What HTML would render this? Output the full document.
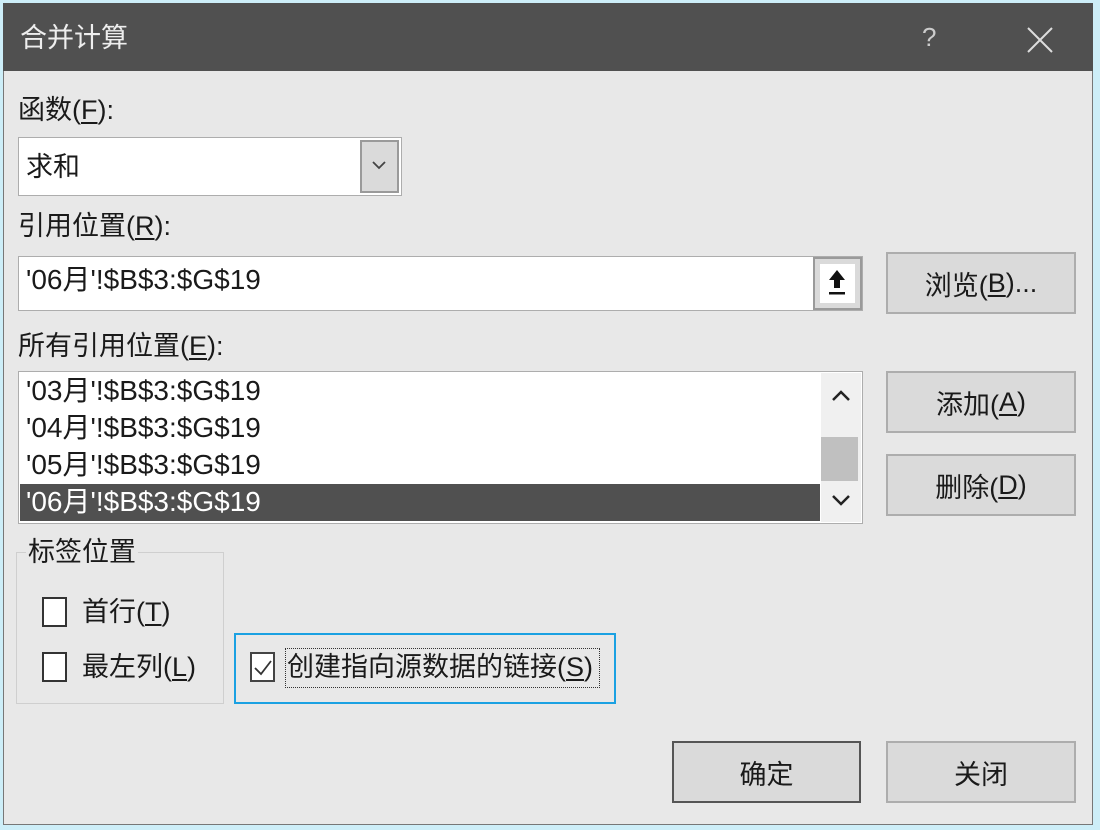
<!DOCTYPE html>
<html><head><meta charset="utf-8"><style>
*{box-sizing:border-box;margin:0;padding:0}
body{width:1100px;height:830px;background:#cdeef8;position:relative;overflow:hidden;font-family:"Liberation Sans","Noto Sans CJK SC",sans-serif;color:#1a1a1a}
.a{position:absolute}
.t{font-size:27px;line-height:30px;white-space:nowrap}
.r{font-size:28px}
.btn{position:absolute;background:#dadada;border:2px solid #adadad;font-size:27px;display:flex;align-items:center;justify-content:center}
.cb{position:absolute;width:25px;height:30px;background:#fff;border:2px solid #333}
u{text-decoration:underline;text-underline-offset:3px}
</style></head><body>
<div class="a" style="left:3px;top:3px;width:1090px;height:822px;background:#e8e8e8;border:1px solid #777"></div>
<div class="a" style="left:3px;top:3px;width:1090px;height:68px;background:#505050"></div>
<div class="a t" style="left:20px;top:23px;color:#eee;font-size:27px">合并计算</div>
<div class="a t" style="left:922px;top:22px;color:#ccc;font-size:26px">?</div>
<svg class="a" style="left:1026px;top:26px" width="28" height="28"><path d="M2 2L26 26M26 2L2 26" stroke="#ddd" stroke-width="2"/></svg>

<div class="a t" style="left:18px;top:95px">函数(<u>F</u>):</div>
<div class="a" style="left:18px;top:137px;width:384px;height:59px;background:#fff;border:1px solid #adadad"></div>
<div class="a t" style="left:26px;top:152px">求和</div>
<div class="a" style="left:360px;top:140px;width:39px;height:53px;background:#dadada;border:2px solid #9a9a9a"></div>
<svg class="a" style="left:371px;top:160px" width="16" height="10"><path d="M2 2L8 8L14 2" fill="none" stroke="#444" stroke-width="1.8"/></svg>

<div class="a t" style="left:18px;top:211px">引用位置(<u>R</u>):</div>
<div class="a" style="left:18px;top:256px;width:845px;height:55px;background:#fff;border:1px solid #adadad"></div>
<div class="a t r" style="left:26px;top:265px">'06月'!$B$3:$G$19</div>
<div class="a" style="left:813px;top:257px;width:49px;height:53px;background:#dadada;border:2px solid #9a9a9a"></div>
<div class="a" style="left:820px;top:264px;width:35px;height:39px;background:#fff"></div>
<svg class="a" style="left:826px;top:268px" width="22" height="30"><path d="M11 2L3 12H8V20H14V12H19Z" fill="#111"/><rect x="3" y="24" width="16" height="2.5" fill="#111"/></svg>
<div class="btn" style="left:886px;top:252px;width:190px;height:62px">浏览(<u>B</u>)...</div>

<div class="a t" style="left:18px;top:331px">所有引用位置(<u>E</u>):</div>
<div class="a" style="left:18px;top:371px;width:845px;height:153px;background:#fff;border:1px solid #adadad"></div>
<div class="a t r" style="left:26px;top:376px">'03月'!$B$3:$G$19</div>
<div class="a t r" style="left:26px;top:413px">'04月'!$B$3:$G$19</div>
<div class="a t r" style="left:26px;top:450px">'05月'!$B$3:$G$19</div>
<div class="a" style="left:20px;top:484px;width:800px;height:37px;background:#505050"></div>
<div class="a t r" style="left:26px;top:487px;color:#fff">'06月'!$B$3:$G$19</div>
<div class="a" style="left:821px;top:373px;width:40px;height:149px;background:#f0f0f0"></div>
<div class="a" style="left:821px;top:437px;width:37px;height:44px;background:#c0c0c0"></div>
<svg class="a" style="left:831px;top:390px" width="20" height="12"><path d="M2 10L10 2L18 10" fill="none" stroke="#222" stroke-width="2.5"/></svg>
<svg class="a" style="left:831px;top:494px" width="20" height="12"><path d="M2 2L10 10L18 2" fill="none" stroke="#222" stroke-width="2.5"/></svg>
<div class="btn" style="left:886px;top:371px;width:190px;height:62px">添加(<u>A</u>)</div>
<div class="btn" style="left:886px;top:454px;width:190px;height:62px">删除(<u>D</u>)</div>

<div class="a" style="left:16px;top:552px;width:208px;height:152px;border:1px solid #cfcfcf"></div>
<div class="a t" style="left:26px;top:537px;background:#e8e8e8;padding:0 2px">标签位置</div>
<div class="cb" style="left:42px;top:597px"></div>
<div class="a t" style="left:82px;top:597px">首行(<u>T</u>)</div>
<div class="cb" style="left:42px;top:652px"></div>
<div class="a t" style="left:82px;top:652px">最左列(<u>L</u>)</div>

<div class="a" style="left:234px;top:633px;width:382px;height:71px;border:2px solid #1ba1e2"></div>
<div class="cb" style="left:250px;top:652px;border-color:#444"></div>
<svg class="a" style="left:253px;top:659px" width="20" height="18"><path d="M2 9L8 15L18 2" fill="none" stroke="#333" stroke-width="1.8"/></svg>
<div class="a" style="left:285px;top:648px;width:315px;height:40px;border:1px dotted #333"></div>
<div class="a t" style="left:287px;top:652px">创建指向源数据的链接(<u>S</u>)</div>

<div class="btn" style="left:672px;top:741px;width:189px;height:62px;border-color:#555">确定</div>
<div class="btn" style="left:886px;top:741px;width:190px;height:62px">关闭</div>
</body></html>
